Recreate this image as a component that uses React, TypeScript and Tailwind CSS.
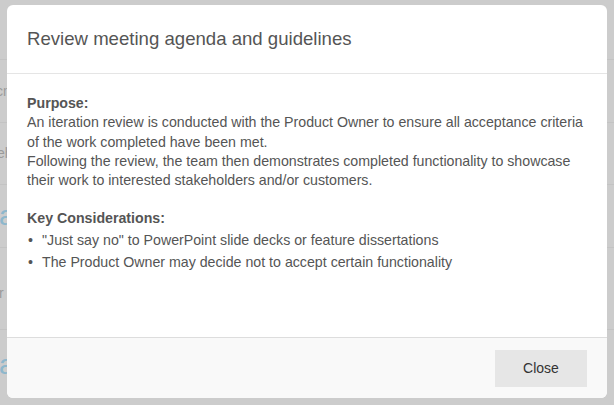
import React from "react";

export default function App() {
  return (
    <div className="relative w-[614px] h-[405px] overflow-hidden bg-[#cccccc] font-['Liberation_Sans',Arial,sans-serif]">
      {/* background page (dimmed) */}
      <div className="flex flex-col text-[#9a9a9a]" aria-hidden="true">
        <div className="h-[60px] border-b border-[#c3c3c3]" />
        <div className="h-[63px] border-b border-[#c3c3c3] flex items-center text-[14px]">
          <span className="-ml-[4px]">cm</span>
        </div>
        <div className="h-[62px] border-b border-[#c3c3c3] flex items-center text-[14px]">
          <span className="-ml-[3px]">eh</span>
        </div>
        <div className="h-[63px] border-b border-[#c3c3c3] flex items-center text-[28px] text-[#8db7cc]">
          <span className="-ml-[1px]">a</span>
        </div>
        <div className="h-[82px] border-b border-[#c3c3c3] flex items-center text-[14px] pt-[10px]">
          <span className="-ml-[4px]">ir</span>
        </div>
        <div className="h-[70px] flex items-start pt-[14px] text-[28px] text-[#8db7cc]">
          <span className="-ml-[1px]">a</span>
        </div>
      </div>

      {/* modal */}
      <div className="absolute left-[7px] top-[5px] w-[600px] h-[393px] bg-white rounded-[6px] flex flex-col overflow-hidden">
        <div className="h-[69px] shrink-0 border-b border-[#e5e5e5] flex items-center px-[20px]">
          <h4 className="text-[18.6px] text-[#555555] leading-none">
            Review meeting agenda and guidelines
          </h4>
        </div>
        <div className="flex-1 px-[20px] pt-[20px] text-[14.2px] leading-[19.25px] text-[#555555]">
          <div className="font-bold">Purpose:</div>
          <div>
            An iteration review is conducted with the Product Owner to ensure all acceptance criteria
            of the work completed have been met.
          </div>
          <div>
            Following the review, the team then demonstrates completed functionality to showcase
            their work to interested stakeholders and/or customers.
          </div>
          <div className="font-bold mt-[18.5px]">Key Considerations:</div>
          <ul className="mt-[1px]">
            <li className="flex py-[1.5px]">
              <span className="w-[15px] shrink-0 pl-[1px]">•</span>
              <span>"Just say no" to PowerPoint slide decks or feature dissertations</span>
            </li>
            <li className="flex py-[1.5px]">
              <span className="w-[15px] shrink-0 pl-[1px]">•</span>
              <span>The Product Owner may decide not to accept certain functionality</span>
            </li>
          </ul>
        </div>
        <div className="h-[61px] shrink-0 border-t border-[#dddddd] bg-[#f9f9f9] flex items-center justify-end px-[20px]">
          <button className="w-[92px] h-[37px] bg-[#e6e6e6] text-[14px] text-[#333333]">
            Close
          </button>
        </div>
      </div>
    </div>
  );
}
